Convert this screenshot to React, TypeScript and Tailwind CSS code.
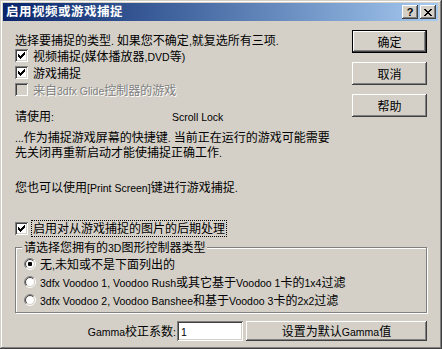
import { ReactNode } from "react"

const CJK = /([\u2e80-\u9fff\uff00-\uffef]+)/

// Chinese glyphs at 12px, Latin runs a bit smaller (Tahoma-ish width)
function T({ s }: { s: string }) {
  return (
    <span>
      {s
        .split(CJK)
        .filter(Boolean)
        .map((p, i) =>
          CJK.test(p) ? (
            <span key={i} className="text-[12px]">
              {p}
            </span>
          ) : (
            <span key={i} className="text-[10.5px]">
              {p}
            </span>
          )
        )}
    </span>
  )
}

const checkRows = ["......#", ".....##", "#...###", "##.###.", "#####..", ".###...", "..#...."]

function Check({ checked, disabled }: { checked?: boolean; disabled?: boolean }) {
  return (
    <span
      className={`block w-[13px] h-[13px] shrink-0 shadow-[inset_1px_1px_0_#808080,inset_-1px_-1px_0_#ffffff,inset_2px_2px_0_#404040,inset_-2px_-2px_0_#d4d0c8] ${
        disabled ? "bg-[#d4d0c8]" : "bg-white"
      }`}
    >
      {checked && (
        <svg width="13" height="13" viewBox="0 0 13 13" shapeRendering="crispEdges">
          {checkRows.map((row, y) =>
            row.split("").map((c, x) =>
              c === "#" ? <rect key={`${x}-${y}`} x={3 + x} y={3 + y} width="1" height="1" fill="#000" /> : null
            )
          )}
        </svg>
      )}
    </span>
  )
}

function arc(r: number, tl: boolean) {
  const k = r * 0.7071
  const a = `${6 - k} ${6 + k}`
  const b = `${6 + k} ${6 - k}`
  return tl ? `M${a} A${r} ${r} 0 0 1 ${b}` : `M${b} A${r} ${r} 0 0 1 ${a}`
}

function Radio({ on }: { on?: boolean }) {
  return (
    <svg width="12" height="12" viewBox="0 0 12 12" className="shrink-0">
      <circle cx="6" cy="6" r="4.5" fill="#fff" />
      <path d={arc(5.5, true)} stroke="#808080" fill="none" />
      <path d={arc(5.5, false)} stroke="#ffffff" fill="none" />
      <path d={arc(4.5, true)} stroke="#404040" fill="none" />
      <path d={arc(4.5, false)} stroke="#d4d0c8" fill="none" />
      {on && <rect x="4" y="4" width="4" height="4" rx="1" fill="#000" />}
    </svg>
  )
}

const raised =
  "bg-[#d4d0c8] shadow-[inset_-1px_-1px_0_#404040,inset_1px_1px_0_#ffffff,inset_-2px_-2px_0_#808080,inset_2px_2px_0_#d4d0c8]"

function Button({ children, def, className = "" }: { children: ReactNode; def?: boolean; className?: string }) {
  return (
    <button
      className={`flex items-center justify-center h-[23px] ${raised} ${def ? "border border-black" : ""} ${className}`}
    >
      {children}
    </button>
  )
}

function Row({ children, className = "" }: { children: ReactNode; className?: string }) {
  return <div className={`flex items-center whitespace-nowrap ${className}`}>{children}</div>
}

export default function App() {
  return (
    <div className="w-[442px] h-[349px] overflow-hidden bg-[#d4d0c8] text-black [text-autospace:no-autospace] font-['Liberation_Sans','Noto_Sans_CJK_SC',sans-serif] shadow-[inset_-1px_-1px_0_#404040,inset_1px_1px_0_#d4d0c8,inset_-2px_-2px_0_#808080,inset_2px_2px_0_#ffffff]">
      {/* title bar */}
      <div className="flex items-center ml-[3px] mr-[4px] mt-[3px] h-[18px] bg-linear-to-r from-[#0a246a] to-[#a6caf0]">
        <span className="pl-[3px] text-[12.5px] font-bold text-white tracking-[0.5px] leading-[18px]">启用视频或游戏捕捉</span>
        <div className="ml-auto flex gap-[2px] mr-[2px]">
          <span className={`flex items-center justify-center w-[16px] h-[14px] ${raised}`}>
            <span className="text-[11px] font-bold leading-none font-['Liberation_Sans',sans-serif]">?</span>
          </span>
          <span className={`flex items-center justify-center w-[16px] h-[14px] ${raised}`}>
            <svg width="8" height="7" viewBox="0 0 8 7" shapeRendering="crispEdges">
              <path d="M0 0h2v1H0zM6 0h2v1H6zM1 1h2v1H1zM5 1h2v1H5zM2 2h4v1H2zM3 3h2v1H3zM2 4h4v1H2zM1 5h2v1H1zM5 5h2v1H5zM0 6h2v1H0zM6 6h2v1H6z" fill="#000" />
            </svg>
          </span>
        </div>
      </div>

      <div className="px-[15px]">
        <div className="flex">
          <div className="flex-1 flex flex-col">
            <Row className="mt-[12px] h-[14px]">
              <T s="选择要捕捉的类型. 如果您不确定,就复选所有三项." />
            </Row>
            <Row className="h-[17px] gap-[5px]">
              <Check checked />
              <T s="视频捕捉(媒体播放器,DVD等)" />
            </Row>
            <Row className="h-[17px] gap-[5px]">
              <Check checked />
              <T s="游戏捕捉" />
            </Row>
            <Row className="h-[17px] gap-[5px]">
              <Check disabled />
              <span className="text-[#808080] [text-shadow:1px_1px_0_#ffffff]">
                <T s="来自3dfx Glide控制器的游戏" />
              </span>
            </Row>
            <Row className="mt-[11px] h-[14px]">
              <span className="w-[157px]">
                <T s="请使用:" />
              </span>
              <T s="Scroll Lock" />
            </Row>
            <div className="mt-[7px] leading-[13px] whitespace-nowrap">
              <T s="...作为捕捉游戏屏幕的快捷键. 当前正在运行的游戏可能需要" />
              <br />
              <T s="先关闭再重新启动才能使捕捉正确工作." />
            </div>
            <Row className="mt-[20px] h-[14px]">
              <T s="您也可以使用[Print Screen]键进行游戏捕捉." />
            </Row>
          </div>

          <div className="w-[75px] flex flex-col gap-[9px] mt-[9px]">
            <Button def>
              <T s="确定" />
            </Button>
            <Button>
              <T s="取消" />
            </Button>
            <Button>
              <T s="帮助" />
            </Button>
          </div>
        </div>

        <Row className="mt-[26px] h-[16px] gap-[4px]">
          <Check checked />
          <span className="h-[15px] flex items-center px-[1px] outline-1 outline-dotted outline-black">
            <T s="启用对从游戏捕捉的图片的后期处理" />
          </span>
        </Row>

        <div className="relative mt-[11px] h-[66px] border border-[#808080] shadow-[1px_1px_0_#ffffff,inset_1px_1px_0_#ffffff] pt-[7px] pl-[8px]">
          <span className="absolute -top-[8px] left-[6px] px-[2px] bg-[#d4d0c8] leading-[14px] whitespace-nowrap">
            <T s="请选择您拥有的3D图形控制器类型" />
          </span>
          <Row className="h-[18px] gap-[4px]">
            <Radio on />
            <T s="无,未知或不是下面列出的" />
          </Row>
          <Row className="h-[18px] gap-[4px]">
            <Radio />
            <T s="3dfx Voodoo 1, Voodoo Rush或其它基于Voodoo 1卡的1x4过滤" />
          </Row>
          <Row className="h-[18px] gap-[4px]">
            <Radio />
            <T s="3dfx Voodoo 2, Voodoo Banshee和基于Voodoo 3卡的2x2过滤" />
          </Row>
        </div>

        <Row className="mt-[8px] h-[20px] justify-end">
          <span className="mr-[1px]">
            <T s="Gamma校正系数:" />
          </span>
          <div className="w-[66px] h-[20px] flex items-center pl-[4px] bg-white shadow-[inset_1px_1px_0_#808080,inset_-1px_-1px_0_#ffffff,inset_2px_2px_0_#404040,inset_-2px_-2px_0_#d4d0c8]">
            <T s="1" />
          </div>
          <Button className="ml-[3px] w-[181px] !h-[20px]">
            <T s="设置为默认Gamma值" />
          </Button>
        </Row>
      </div>
    </div>
  )
}
